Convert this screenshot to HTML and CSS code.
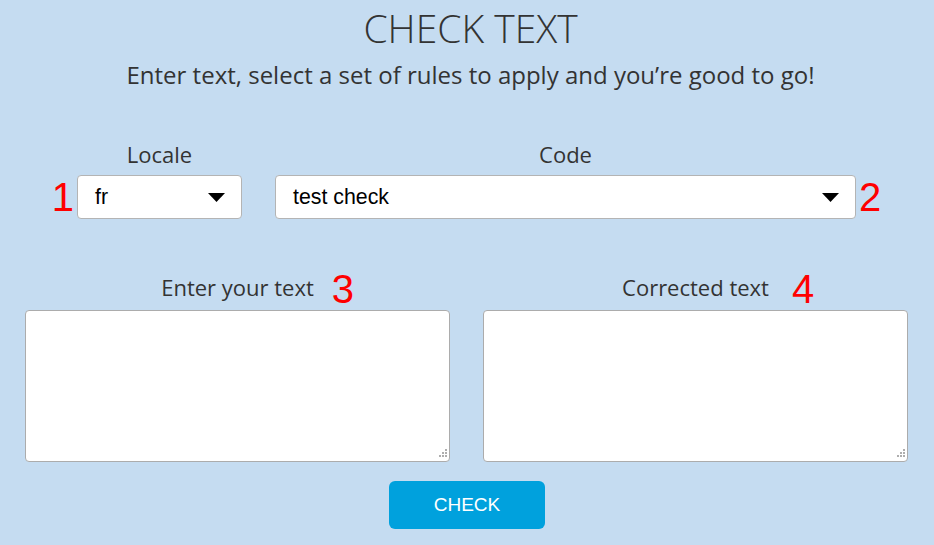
FILE: index.html
```html
<!DOCTYPE html>
<html lang="en">
<head>
<meta charset="utf-8">
<title>Check text</title>
<link rel="stylesheet" href="styles.css">
</head>
<body>
<main class="page">
  <h1 class="title">CHECK TEXT</h1>
  <p class="subtitle">Enter text, select a set of rules to apply and you’re good to go!</p>

  <div class="selects">
    <div class="field field-locale">
      <div class="label">Locale</div>
      <div class="select-wrap">
        <span class="mark mark-left">1</span>
        <div class="select">
          <span class="select-value">fr</span>
          <svg class="caret" width="17" height="9" viewBox="0 0 17 9"><polygon points="0,0 17,0 8.5,9" fill="#000"/></svg>
        </div>
      </div>
    </div>
    <div class="field field-code">
      <div class="label">Code</div>
      <div class="select-wrap">
        <div class="select">
          <span class="select-value">test check</span>
          <svg class="caret" width="17" height="9" viewBox="0 0 17 9"><polygon points="0,0 17,0 8.5,9" fill="#000"/></svg>
        </div>
        <span class="mark mark-right">2</span>
      </div>
    </div>
  </div>

  <div class="texts">
    <div class="text-col">
      <div class="label label-text"><span class="label-inner">Enter your text<span class="mark mark-label">3</span></span></div>
      <div class="area-wrap">
        <textarea class="area"></textarea>
        <svg class="grip" width="8" height="8" viewBox="0 0 8 8" fill="#aeaeae"><rect x="6" y="0" width="2" height="2"/><rect x="3" y="3" width="2" height="2"/><rect x="6" y="3" width="2" height="2"/><rect x="0" y="6" width="2" height="2"/><rect x="3" y="6" width="2" height="2"/><rect x="6" y="6" width="2" height="2"/></svg>
      </div>
    </div>
    <div class="text-col">
      <div class="label label-text"><span class="label-inner">Corrected text<span class="mark mark-label mark-4">4</span></span></div>
      <div class="area-wrap">
        <textarea class="area"></textarea>
        <svg class="grip" width="8" height="8" viewBox="0 0 8 8" fill="#aeaeae"><rect x="6" y="0" width="2" height="2"/><rect x="3" y="3" width="2" height="2"/><rect x="6" y="3" width="2" height="2"/><rect x="0" y="6" width="2" height="2"/><rect x="3" y="6" width="2" height="2"/><rect x="6" y="6" width="2" height="2"/></svg>
      </div>
    </div>
  </div>

  <div class="actions">
    <button class="btn" type="button">CHECK</button>
  </div>
</main>
</body>
</html>
```
FILE: styles.css
```css
html, body {
  margin: 0;
  padding: 0;
}
body {
  background: #c5dcf1;
  font-family: "Open Sans", "Liberation Sans", sans-serif;
  color: #333;
  width: 934px;
  height: 545px;
  overflow: hidden;
}
.page {
  display: flex;
  flex-direction: column;
}
.title {
  margin: 6px 0 0;
  padding-left: 7px;
  font-weight: 300;
  font-size: 39px;
  line-height: 44px;
  text-align: center;
  color: #333;
}
.subtitle {
  margin: 10px 0 0;
  padding-left: 7px;
  font-size: 24px;
  line-height: 30px;
  text-align: center;
}
.selects {
  display: flex;
  gap: 33px;
  padding-left: 77px;
  margin-top: 50px;
}
.field {
  display: flex;
  flex-direction: column;
  align-items: stretch;
}
.field-locale { width: 165px; }
.field-code { width: 581px; }
.label {
  font-size: 22px;
  line-height: 28px;
  text-align: center;
  color: #333;
}
.select-wrap {
  position: relative;
  margin-top: 7px;
}
.select {
  height: 44px;
  box-sizing: border-box;
  background: #fff;
  border: 1px solid #b4b4b4;
  border-radius: 4px;
  display: flex;
  align-items: center;
  justify-content: space-between;
  padding: 0 16px 0 17px;
  font-family: "Liberation Sans", Arial, sans-serif;
  font-size: 21.33px;
  color: #000;
}
.caret { display: block; }
.mark {
  position: absolute;
  color: #ff0000;
  font-family: "Liberation Sans", Arial, sans-serif;
  font-size: 40px;
  line-height: 44px;
}
.mark-left { right: 100%; margin-right: 3px; top: 0; }
.mark-right { left: 100%; margin-left: 3px; top: 0; }
.texts {
  display: flex;
  gap: 33px;
  padding: 0 25px;
  margin-top: 54px;
}
.text-col {
  width: 425px;
  display: flex;
  flex-direction: column;
}
.label-inner {
  position: relative;
}
.mark-label {
  left: 100%;
  margin-left: 18px;
  top: -5px;
}
.mark-4 { margin-left: 23px; }
.area-wrap {
  position: relative;
  margin-top: 9px;
}
.area {
  display: block;
  width: 425px;
  height: 152px;
  box-sizing: border-box;
  border: 1px solid #acacac;
  border-radius: 4px;
  background: #fff;
  resize: none;
  margin: 0;
}
.grip {
  position: absolute;
  right: 3px;
  bottom: 5px;
}
.actions {
  display: flex;
  justify-content: center;
  margin-top: 19px;
}
.btn {
  width: 156px;
  height: 48px;
  border: none;
  border-radius: 6px;
  background: #00a1dd;
  color: #fff;
  font-family: "Liberation Sans", Arial, sans-serif;
  font-size: 19px;
  padding: 0;
}
```
